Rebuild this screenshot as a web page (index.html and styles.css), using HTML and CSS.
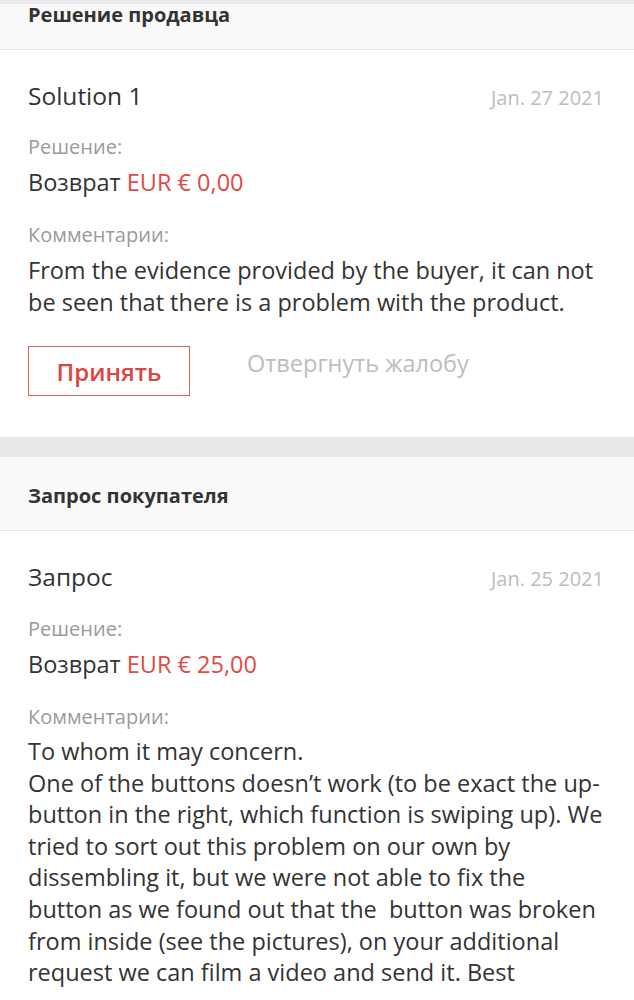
FILE: index.html
```html
<!DOCTYPE html>
<html lang="ru">
<head>
    <meta charset="UTF-8">
    <meta name="viewport" content="width=device-width, initial-scale=1.0">
    <title>Решение спора</title>
    <link rel="stylesheet" href="styles.css">
</head>
<body>
    <div class="band band-top"></div>

    <section class="section">
        <div class="section-head section-head-cut">
            <h2>Решение продавца</h2>
        </div>
        <div class="card">
            <div class="card-top">
                <h3 class="card-title">Solution 1</h3>
                <span class="card-date">Jan. 27 2021</span>
            </div>
            <div class="label">Решение:</div>
            <div class="value">Возврат <span class="amount">EUR € 0,00</span></div>
            <div class="label label-comment">Комментарии:</div>
            <p class="comment">From the evidence provided by the buyer, it can not be seen that there is a problem with the product.</p>
            <div class="actions">
                <button class="button-accept">Принять</button>
                <a class="link-reject" href="#">Отвергнуть жалобу</a>
            </div>
        </div>
    </section>

    <div class="band"></div>

    <section class="section">
        <div class="section-head">
            <h2>Запрос покупателя</h2>
        </div>
        <div class="card">
            <div class="card-top">
                <h3 class="card-title">Запрос</h3>
                <span class="card-date">Jan. 25 2021</span>
            </div>
            <div class="label label-second">Решение:</div>
            <div class="value">Возврат <span class="amount">EUR € 25,00</span></div>
            <div class="label label-comment">Комментарии:</div>
            <p class="comment comment-long">To whom it may concern.<br>One of the buttons doesn’t work (to be exact the up-button in the right, which function is swiping up). We tried to sort out this problem on our own by dissembling it, but we were not able to fix the button as we found out that the&nbsp; button was broken from inside (see the pictures), on your additional request we can film a video and send it. Best</p>
        </div>
    </section>
</body>
</html>
```

FILE: styles.css
```css
body {
    font-family: "Open Sans", "Liberation Sans", sans-serif;
    margin: 0;
    padding: 0;
    background-color: #ffffff;
    color: #333;
}

.band {
    height: 20px;
    background-color: #e9e9ec;
}

.band-top {
    height: 4px;
}

.section-head {
    background-color: #f9f9fa;
    border-bottom: 1px solid #e6e6e8;
    padding: 26px 28px 21px;
}

.section-head h2 {
    margin: 0;
    font-size: 20px;
    font-weight: 700;
    line-height: 26px;
    color: #333;
}

.section-head-cut {
    padding-top: 0;
    padding-bottom: 23px;
}

.section-head-cut h2 {
    line-height: 22px;
}

.card {
    padding: 30px 30px 41px 28px;
}

.card-top {
    display: flex;
    justify-content: space-between;
    align-items: baseline;
}

.card-title {
    margin: 0;
    font-size: 24.5px;
    font-weight: 400;
    line-height: 32px;
    color: #333;
}

.card-date {
    font-size: 20px;
    color: #bcbcbc;
}

.label {
    margin-top: 22px;
    font-size: 20px;
    line-height: 26px;
    color: #9a9a9a;
}

.label-second {
    margin-top: 23px;
}

.label-comment {
    margin-top: 25px;
}

.value {
    margin-top: 7px;
    font-size: 23.5px;
    line-height: 30px;
    color: #333;
}

.amount {
    color: #e04a44;
}

.comment {
    margin: 6px 0 0;
    font-size: 23.5px;
    line-height: 32px;
    color: #333;
}

.comment-long {
    margin-top: 6px;
    line-height: 31.6px;
}

.actions {
    display: flex;
    align-items: flex-start;
    gap: 57px;
    margin-top: 28px;
}

.button-accept {
    width: 162px;
    height: 50px;
    padding: 0;
    background-color: #fff;
    border: 1px solid #d9605c;
    border-radius: 0;
    color: #dc4541;
    font-family: inherit;
    font-size: 24px;
    font-weight: 600;
    cursor: pointer;
}

.link-reject {
    margin-top: 1px;
    font-size: 23.5px;
    line-height: 32px;
    color: #bdbdbd;
    text-decoration: none;
}
```
